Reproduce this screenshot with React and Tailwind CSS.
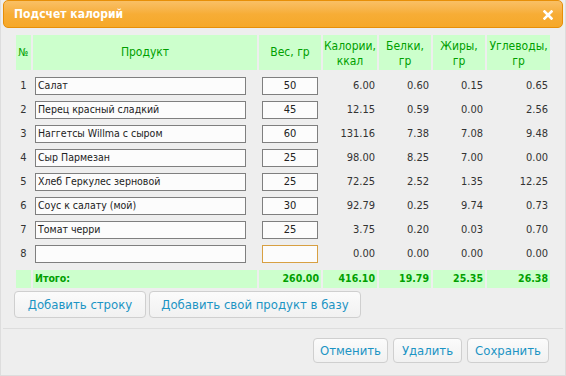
import React from "react";

const rows = [
  { n: 1, name: "Салат", w: "50", k: "6.00", b: "0.60", j: "0.15", u: "0.65" },
  { n: 2, name: "Перец красный сладкий", w: "45", k: "12.15", b: "0.59", j: "0.00", u: "2.56" },
  { n: 3, name: "Наггетсы Willma с сыром", w: "60", k: "131.16", b: "7.38", j: "7.08", u: "9.48" },
  { n: 4, name: "Сыр Пармезан", w: "25", k: "98.00", b: "8.25", j: "7.00", u: "0.00" },
  { n: 5, name: "Хлеб Геркулес зерновой", w: "25", k: "72.25", b: "2.52", j: "1.35", u: "12.25" },
  { n: 6, name: "Соус к салату (мой)", w: "30", k: "92.79", b: "0.25", j: "9.74", u: "0.73" },
  { n: 7, name: "Томат черри", w: "25", k: "3.75", b: "0.20", j: "0.03", u: "0.70" },
  { n: 8, name: "", w: "", k: "0.00", b: "0.00", j: "0.00", u: "0.00", focus: true },
];

const grid = "grid grid-cols-[15px_224px_62px_54px_52px_52px_63px] gap-x-[2px]";

function Btn({ children, className }) {
  return (
    <button
      className={
        "flex items-center justify-center rounded-[4px] border border-[#cfcfcf] bg-gradient-to-b from-[#fbfbfb] to-[#f1f1f1] text-[#1c94c4] text-[13px] " +
        className
      }
    >
      {children}
    </button>
  );
}

export default function App() {
  return (
    <div className="w-[566px] h-[376px] bg-[#eeeeee] border-x border-b border-[#dddddd] px-[2px] flex flex-col font-['DejaVu_Sans_Condensed','Liberation_Sans',sans-serif] text-[11px] text-[#333333]">
      <div className="h-[28px] shrink-0 rounded-[5px] border border-[#e78f08] bg-gradient-to-b from-[#f9c065] via-[#f7ad36] to-[#f6a828] flex items-center justify-between pl-[10px] pr-[9px]">
        <span className="text-white font-bold text-[12px]">Подсчет калорий</span>
        <svg width="10" height="10" viewBox="0 0 10 10" className="mt-[1px]">
          <path d="M1.5 1.5 L8.5 8.5 M8.5 1.5 L1.5 8.5" stroke="white" strokeWidth="2.6" strokeLinecap="square" />
        </svg>
      </div>

      <div className="px-[11px] pt-[7px] flex flex-col">
        <div className="px-[2px] flex flex-col">
          <div className={grid + " h-[35px] text-[#00a000] text-[12px] leading-[15px]"}>
            <div className="bg-[#ccffcc] flex items-center justify-center text-[11px]">№</div>
            <div className="bg-[#ccffcc] flex items-center justify-center">Продукт</div>
            <div className="bg-[#ccffcc] flex items-center justify-center">Вес, гр</div>
            <div className="bg-[#ccffcc] flex items-center justify-center text-center pt-[2px]">Калории,<br />ккал</div>
            <div className="bg-[#ccffcc] flex items-center justify-center text-center pt-[2px]">Белки,<br />гр</div>
            <div className="bg-[#ccffcc] flex items-center justify-center text-center pt-[2px]">Жиры,<br />гр</div>
            <div className="bg-[#ccffcc] flex items-center justify-center text-center pt-[2px]">Углеводы,<br />гр</div>
          </div>

          <div className="mt-[5px] flex flex-col gap-y-[2px]">
            {rows.map((r) => (
              <div key={r.n} className={grid + " h-[22px] items-center"}>
                <div className="text-center">{r.n}</div>
                <div className="pl-[2px]">
                  <div className="w-[211px] h-[18px] border border-[#7f7f7f] bg-[#fcfcfc] flex items-center pl-[2px] text-[#222222] text-[10.5px]">
                    {r.name}
                  </div>
                </div>
                <div className="flex justify-center">
                  <div
                    className={
                      "w-[56px] h-[18px] border bg-[#fcfcfc] flex items-center justify-center text-[#222222] " +
                      (r.focus ? "border-[#d8a042]" : "border-[#7f7f7f]")
                    }
                  >
                    {r.w}
                  </div>
                </div>
                <div className="text-right pr-[2px]">{r.k}</div>
                <div className="text-right pr-[2px]">{r.b}</div>
                <div className="text-right pr-[2px]">{r.j}</div>
                <div className="text-right pr-[2px]">{r.u}</div>
              </div>
            ))}
          </div>

          <div className={grid + " mt-[5px] h-[18px] items-stretch text-[#00a000] font-bold text-[10.5px]"}>
            <div className="bg-[#ccffcc]"></div>
            <div className="bg-[#ccffcc] flex items-center pl-[2px]">Итого:</div>
            <div className="bg-[#ccffcc] flex items-center justify-end pr-[2px]">260.00</div>
            <div className="bg-[#ccffcc] flex items-center justify-end pr-[2px]">416.10</div>
            <div className="bg-[#ccffcc] flex items-center justify-end pr-[2px]">19.79</div>
            <div className="bg-[#ccffcc] flex items-center justify-end pr-[2px]">25.35</div>
            <div className="bg-[#ccffcc] flex items-center justify-end pr-[2px]">26.38</div>
          </div>
        </div>

        <div className="mt-[3px] flex gap-[3px]">
          <Btn className="w-[132px] h-[27px]">Добавить строку</Btn>
          <Btn className="w-[212px] h-[27px]">Добавить свой продукт в базу</Btn>
        </div>
      </div>

      <div className="mt-[10px] border-t border-[#dddddd]"></div>

      <div className="mt-[9px] flex justify-end gap-[5px] pr-[14px]">
        <Btn className="w-[75px] h-[25px]">Отменить</Btn>
        <Btn className="w-[69px] h-[25px]">Удалить</Btn>
        <Btn className="w-[82px] h-[25px]">Сохранить</Btn>
      </div>
    </div>
  );
}
